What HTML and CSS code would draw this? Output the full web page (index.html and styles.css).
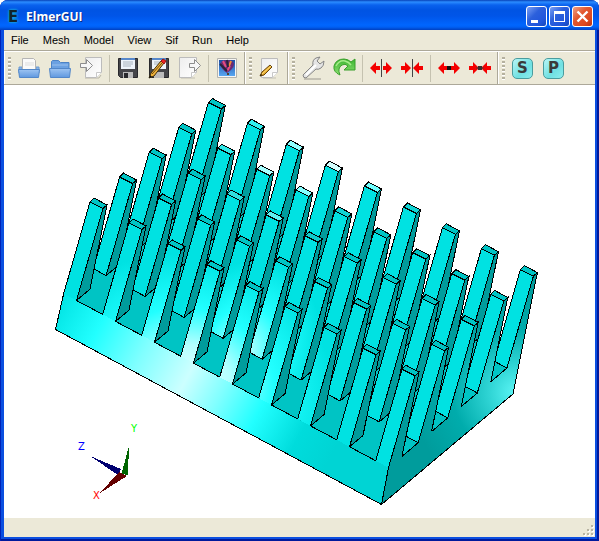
FILE: index.html
```html
<!DOCTYPE html>
<html lang="en">
<head>
<meta charset="utf-8">
<title>ElmerGUI</title>
<link rel="stylesheet" href="styles.css">
</head>
<body>
<div class="window">
  <header class="titlebar">
    <span class="app-icon">E</span>
    <h1 class="title">ElmerGUI</h1>
    <button class="caption" aria-label="Minimize"><svg viewBox="0 0 21 21"><path d="M5 14h7v3h-7z" fill="#fff"/></svg></button>
    <button class="caption" aria-label="Maximize"><svg viewBox="0 0 21 21"><path d="M5 5h11v11H5zM6 8v7h9V8z" fill="#fff" fill-rule="evenodd"/></svg></button>
    <button class="caption close" aria-label="Close"><svg viewBox="0 0 21 21"><path d="M5.500 5.500l10 10M15.500 5.500l-10 10" stroke="#fff" stroke-width="2.400"/></svg></button>
  </header>
  <nav class="menubar">
    <button>File</button><button>Mesh</button><button>Model</button><button>View</button><button>Sif</button><button>Run</button><button>Help</button>
  </nav>
  <div class="toolbars">
    <div class="toolbar">
      <span class="grip"></span>
      <button class="tool" aria-label="Open"><svg viewBox="0 0 24 24"><path d="M2 11h3v6H2zM19 11h3v6h-3z" fill="#86b3ea" stroke="#6d9bd2"/><path d="M5.500 2.500h11l2 2v11h-13z" fill="#fafafa" stroke="#b5b5b5"/><path d="M8 7h9M8 9h9" stroke="#ddd"/><path d="M1.500 13.500h21l-1 8h-19z" fill="url(#tray)" stroke="#5287c9"/></svg></button>
      <button class="tool" aria-label="Open folder"><svg viewBox="0 0 24 24"><path d="M3.500 14V5.500l1-1h6l2 2h8.500V14z" fill="#6ba1e2" stroke="#4d83c5"/><path d="M4 9h16" stroke="#9bc1ee"/><path d="M1.500 12.500h21l-1 9h-19z" fill="url(#tray)" stroke="#5287c9"/></svg></button>
      <button class="tool" aria-label="Import"><svg viewBox="0 0 24 24"><path d="M6 22h14l2-3" stroke="#b9b6a8" fill="none"/><path d="M6.500 1.500h16v15l-5 5h-11z" fill="url(#paper)" stroke="#bcbcbc"/><path d="M17.500 21.500v-5h5" fill="#fff" stroke="#c8c8c8"/><path d="M1.500 7.500h6v-4l6 6-6 6v-4h-6z" fill="#f7f7f7" stroke="#8d8d8d"/></svg></button>
      <span class="sep"></span>
      <button class="tool" aria-label="Save"><svg viewBox="0 0 24 24"><path d="M2.500 2.500h19v19h-17l-2-2z" fill="#454549" stroke="#29292c"/><path d="M5 2h14v11H5z" fill="#edf3fa"/><path d="M5 2h14v2H5z" fill="#5888cb"/><path d="M7 6h10M7 8h10M7 10h8" stroke="#a9b3bd"/><path d="M7 16h10v6H7z" fill="#bbb"/><path d="M8 17h4v5H8z" fill="#29292c"/></svg></button>
      <button class="tool" aria-label="Save as"><svg viewBox="0 0 24 24"><path d="M2.500 2.500h19v19h-17l-2-2z" fill="#454549" stroke="#29292c"/><path d="M5 2h14v11H5z" fill="#edf3fa"/><path d="M5 2h14v2H5z" fill="#5888cb"/><path d="M7 6h10M7 8h8" stroke="#a9b3bd"/><path d="M7 16h10v6H7z" fill="#bbb"/><path d="M2 22l2-5L14 5l3 2L7 20z" fill="#eeb13a" stroke="#40300e"/><path d="M5 18L15 7" stroke="#704c12"/><path d="M14 5l2-2 3 2-2 3z" fill="#e22" stroke="#911"/><path d="M2 22l1-3 2 2z" fill="#111"/></svg></button>
      <button class="tool" aria-label="Export"><svg viewBox="0 0 24 24"><path d="M3 22h14" stroke="#c2bfb2"/><path d="M1.500 1.500h17v15l-5 5h-12z" fill="url(#paper)" stroke="#bcbcbc"/><path d="M13.500 21.500v-5h5" fill="#fff" stroke="#c8c8c8"/><path d="M11.500 7.500h5v-4l6 6-6 6v-4h-5z" fill="#f7f7f7" stroke="#8d8d8d"/></svg></button>
      <span class="sep"></span>
      <button class="tool" aria-label="Save picture"><svg viewBox="0 0 24 24"><path d="M2.500 2.500h19v19h-19z" fill="#f6f6f4" stroke="#b3b3ae"/><path d="M4 4h16v16H4z" fill="url(#sky)"/><path d="M5 8q2-4 7-4 6 0 7 4 0 3-3 6l-4 3q-5-3-7-9" fill="#6b2a74"/><path d="M8 5l3 6M15 10l-3 5" stroke="#e44c80" stroke-width="2"/><path d="M16 5l-2 5" stroke="#f18a38" stroke-width="2"/><path d="M5 8l7 7M12 4l1 7" stroke="#28253a" stroke-width="2"/><path d="M12 17h2v2h-2z" fill="#543"/></svg></button>
    </div>
    <div class="toolbar">
      <span class="grip"></span>
      <button class="tool" aria-label="Edit"><svg viewBox="0 0 24 24"><path d="M5 22h13" stroke="#c2bfb2"/><path d="M3.500 2.500h16v14l-5 5h-11z" fill="url(#paper)" stroke="#bcbcbc"/><path d="M14.500 21.500v-5h5" fill="#fff" stroke="#c8c8c8"/><path d="M2 20l2-4 8-7 2 2-8 8z" fill="#e7a92c" stroke="#65420b"/><path d="M4 18l9-8" stroke="#ffe07a"/><path d="M2 20l1-2 1 1z" fill="#111"/></svg></button>
    </div>
    <div class="toolbar">
      <span class="grip"></span>
      <button class="tool" aria-label="Configure"><svg viewBox="0 0 24 24"><path d="M3 23h17" stroke="#c4c1b4" stroke-width="2"/><path d="M2 19L12 9q-1-5 3-7l4-1-3 4 3 3 4-3q0 5-3 7-3 2-5 1L5 22q-3 0-3-3z" fill="#e5e5e5" stroke="#858585"/><path d="M5 19L15 9" stroke="#fff" stroke-width="2"/></svg></button>
      <button class="tool" aria-label="Remesh"><svg viewBox="0 0 24 24"><path d="M8 19q-7-3-6-9 2-7 10-7 4 0 7 3l4-3v11H12l4-4q-3-3-6-1-5 3-2 10z" fill="url(#leaf)" stroke="#39a02a"/><path d="M4 10q3-6 9-5 4 1 6 4" stroke="#a6ec89" stroke-width="1.500" fill="none"/></svg></button>
      <span class="sep"></span>
      <button class="tool" aria-label="Divide surface"><svg viewBox="0 0 24 24"><path d="M12.500 3v18" stroke="#444"/><path d="M1 12l6-6v4h4v4H7v4zM23 12l-6-6v4h-3v4h3v4z" fill="#f40000"/></svg></button>
      <button class="tool" aria-label="Unify surface"><svg viewBox="0 0 24 24"><path d="M12.500 3v18" stroke="#444"/><path d="M11 12L5 6v4H1v4h4v4zM13 12l6-6v4h4v4h-4v4z" fill="#f40000"/></svg></button>
      <span class="sep"></span>
      <button class="tool" aria-label="Divide edge"><svg viewBox="0 0 24 24"><path d="M1 12l6-6v4h10V6l6 6-6 6v-4H7v4z" fill="#f40000"/><path d="M10 10h4v4h-4z" fill="#111"/></svg></button>
      <button class="tool" aria-label="Unify edge"><svg viewBox="0 0 24 24"><path d="M11 12L5 6v4H1v4h4v4zM13 12l6-6v4h4v4h-4v4z" fill="#f40000"/><path d="M8 12h8" stroke="#444"/><path d="M10 10h4v4h-4z" fill="#333"/></svg></button>
    </div>
    <div class="toolbar last">
      <span class="grip"></span>
      <button class="tool letter"><span>S</span></button>
      <button class="tool letter"><span>P</span></button>
    </div>
  </div>
  <main class="view">
    <svg id="scene" viewBox="4 85 591 433" role="img" aria-label="Heat sink model">
      <defs>
        <linearGradient id="tray" x2="0" y2="1"><stop stop-color="#9dc4f2"/><stop offset="1" stop-color="#5f98df"/></linearGradient>
        <linearGradient id="paper" x2="1" y2="1"><stop stop-color="#eee"/><stop offset="1" stop-color="#fff"/></linearGradient>
        <linearGradient id="sky" x2="0" y2="1"><stop stop-color="#1d4fa4"/><stop offset="1" stop-color="#58a7f2"/></linearGradient>
        <linearGradient id="leaf" x2="0" y2="1"><stop stop-color="#3cb531"/><stop offset="1" stop-color="#8ddf72"/></linearGradient>
        <linearGradient id="slab" gradientUnits="userSpaceOnUse" x1="62" y1="290" x2="340" y2="440">
          <stop stop-color="#00e2e2"/><stop offset=".16" stop-color="#2ff"/><stop offset=".32" stop-color="#80ffff"/><stop offset=".48" stop-color="#ccffff"/><stop offset=".6" stop-color="#80ffff"/><stop offset=".73" stop-color="#2ff"/><stop offset=".88" stop-color="#00dcdc"/><stop offset="1" stop-color="#00d4d4"/>
        </linearGradient>
        <radialGradient id="front" gradientUnits="userSpaceOnUse" cx="0" cy="0" r="1" gradientTransform="translate(195 375) rotate(24) scale(145 115)">
          <stop stop-color="#dff"/><stop offset=".25" stop-color="#b4ffff"/><stop offset=".56" stop-color="#2ff"/><stop offset="1" stop-color="#00e2e2"/>
        </radialGradient>
        <radialGradient id="second" gradientUnits="userSpaceOnUse" cx="0" cy="0" r="1" gradientTransform="translate(240 352) rotate(28) scale(75 95)">
          <stop stop-color="#d4ffff"/><stop offset=".5" stop-color="#2ff"/><stop offset="1" stop-color="#00e2e2"/>
        </radialGradient>
        <radialGradient id="side" gradientUnits="userSpaceOnUse" cx="516" cy="392" r="105">
          <stop stop-color="#5cf5f5"/><stop offset=".25" stop-color="#30d5d5"/><stop offset=".6" stop-color="#00acac"/><stop offset="1" stop-color="#009c9c"/>
        </radialGradient>
      </defs>
      <g id="model"></g>
      <g class="axes">
        <path d="M90 456l31 13-3 6z" fill="#000070"/>
        <path d="M129.500 444l-8 30 6 1z" fill="#006400"/>
        <path d="M100 493l19-21 8 4z" fill="#640000"/>
        <text x="78" y="450" fill="#00f">Z</text>
        <text x="131" y="432" fill="#0f0">Y</text>
        <text x="93" y="499" fill="#f00">X</text>
      </g>
    </svg>
  </main>
  <footer class="status"><svg viewBox="0 0 12 12"><path d="M9 1h2v2H9zM5 5h2v2H5zM9 5h2v2H9zM1 9h2v2H1zM5 9h2v2H5zM9 9h2v2H9z" fill="#fff"/><path d="M8 0h2v2H8zM4 4h2v2H4zM8 4h2v2H8zM0 8h2v2H0zM4 8h2v2H4zM8 8h2v2H8z" fill="#b8b4a2"/></svg></footer>
</div>
<script src="model.js"></script>
</body>
</html>
```
FILE: model.js
```js
// Heat sink: a slab carrying 5 rows of 9 tapered pins, drawn back to front.
const COLS = 9, ROWS = 5;
const model = document.getElementById('model');
const colStep = [39, 20.9], rowStep = [29.6, -24.9];
const TOP = '#00c4c4', FACE = '#00e2e2', SIDE = '#009c9c';
const topColors = {
  '4,1': '#30f0f0', '4,2': '#90ffff', '4,3': '#d4ffff', '4,4': '#70ffff', '4,5': '#10d4d4',
  '3,1': '#30e8e8', '3,2': '#a8ffff', '3,3': '#84ffff', '3,4': '#10d4d4',
  '2,2': '#30dede', '2,3': '#60f0f0', '2,4': '#10cccc'
};

function at(p, r, c) {
  return [p[0] + r * rowStep[0] + c * colStep[0], p[1] + r * rowStep[1] + c * colStep[1]];
}
function draw(points, fill, close) {
  const el = document.createElementNS('http://www.w3.org/2000/svg', 'path');
  el.setAttribute('d', 'M' + points.map(p => p.join(' ')).join('L') + (close ? 'Z' : ''));
  el.setAttribute('fill', fill);
  model.appendChild(el);
  return el;
}
function area(points, fill) { draw(points, fill, true).setAttribute('class', 'area'); }
function line(points) { draw(points, 'none', false); }

const fl = [63.7, 293.5], fr = [76.5, 300.5], br = [90, 289.2];
const tfl = [90, 202], tfr = [103, 208.5], tbr = [107, 205], tbl = [94, 198];
const cornerL = fl, cornerR = at(fr, 0, 8), cornerB = at(br, 4, 8);

area([cornerL, cornerR, cornerB, [196, 181.7]], TOP);
area([cornerL, cornerR, [381.5, 504.5], [55.5, 329.5]], 'url(#slab)');
area([cornerR, cornerB, [513, 394], [381.5, 504.5]], 'url(#side)');
line([cornerL, [55.5, 329.5], [381.5, 504.5], [513, 394], cornerB]);
line([cornerR, [381.5, 504.5]]);

for (let r = ROWS - 1; r >= 0; r--) {
  if (r < ROWS - 1) line([at(br, r, 8), at(fr, r + 1, 8)]);
  for (let c = 0; c < COLS; c++) {
    const q = p => at(p, r, c);
    const sideFace = [q(fr), q(tfr), q(tbr), q(br)];
    const frontFace = [q(fl), q(tfl), q(tfr), q(fr)];
    area(sideFace, c === COLS - 1 ? 'url(#side)' : SIDE);
    line(c === COLS - 1 ? sideFace : sideFace.concat([q(fr)]));
    area(frontFace, r === 0 ? 'url(#front)' : r === 1 ? 'url(#second)' : FACE);
    line(r === 0 ? frontFace : frontFace.concat([q(fl)]));
    draw([q(tfl), q(tfr), q(tbr), q(tbl)], topColors[r + ',' + c] || TOP, true);
    if (r === 0 && c < COLS - 1) line([q(fr), at(fl, 0, c + 1)]);
  }
}
```
FILE: styles.css
```css
* { box-sizing: border-box; }
body {
  margin: 0;
  background: #fff;
  font-family: "Liberation Sans", Arial, sans-serif;
  font-size: 11px;
  color: #000;
}
button { margin: 0; padding: 0; border: 0; background: none; font: inherit; color: inherit; }
svg { display: block; }

.window {
  display: flex;
  flex-direction: column;
  height: 100vh;
  padding: 0 4px 4px;
  border-radius: 8px 8px 0 0;
  background: #0b4fe0;
  box-shadow: inset 1px 0 #0022b8, inset -2px -2px #001a9c;
}
.titlebar {
  flex: none;
  display: flex;
  align-items: center;
  gap: 2px;
  height: 30px;
  margin: 0 -4px;
  padding: 3px 6px 0 8px;
  border-radius: 8px 8px 0 0;
  background: linear-gradient(#0842b8 0, #2b8cff 2px, #0a62ee 5px, #0054e3 10px, #0055e8 16px, #0066ff 25px, #0060f5 27px, #0040c0 30px);
}
.app-icon {
  width: 16px;
  font: bold 15px/16px "DejaVu Sans", sans-serif;
  color: #10242c;
  text-shadow: 0 0 2px #18b8e0, 0 0 3px #18b8e0;
}
.title {
  flex: 1;
  margin: 0;
  font: bold 12px/16px "Open Sans", sans-serif;
  color: #fff;
  text-shadow: 1px 1px #0a2a85;
}
.caption {
  width: 21px;
  height: 21px;
  border: 1px solid #fff;
  border-radius: 3px;
  background: linear-gradient(135deg, #7ba0f4, #2c60dc 40%, #2156dc 75%, #1748b8);
}
.caption svg { width: 21px; height: 21px; margin: -1px; }
.caption.close { background: linear-gradient(135deg, #f0a085, #e2572f 40%, #dc4820 75%, #b83210); }

.menubar {
  flex: none;
  display: flex;
  align-items: center;
  gap: 14px;
  height: 21px;
  padding: 0 7px;
  background: #ece9d8;
  border-bottom: 1px solid #aca899;
}
.toolbars {
  flex: none;
  display: flex;
  height: 34px;
  background: #ece9d8;
  border-top: 1px solid #fff;
  border-bottom: 1px solid #aca899;
}
.toolbar {
  display: flex;
  align-items: center;
  padding: 0 2px 0 3px;
  border-left: 1px solid #fff;
  border-right: 1px solid #aca899;
}
.toolbar.last { flex: 1; border-right: 0; }
.grip {
  width: 3px;
  height: 23px;
  margin-right: 2px;
  background: repeating-linear-gradient(#b5b19f 0 2px, #fff 2px 3px, transparent 3px 4px);
}
.tool { display: grid; place-items: center; width: 31px; height: 30px; }
.tool svg { width: 24px; height: 24px; }
.sep { width: 6px; height: 27px; background: linear-gradient(#c5c2b0, #c5c2b0) 3px 0 / 1px 100% no-repeat; }
.letter span {
  width: 21px;
  height: 21px;
  border: 1px solid #4a9c9e;
  border-radius: 5px;
  background: linear-gradient(135deg, #b8f6f6, #70e0e2 60%, #8eeeee);
  font: bold 15px/19px "DejaVu Sans", sans-serif;
  color: #3a3a3a;
}

.view { flex: 1; min-height: 0; background: #fff; }
.view > svg { width: 100%; height: 100%; }
#model path { stroke: #000; stroke-width: 1; shape-rendering: crispEdges; }
#model .area { stroke: none; }
.axes path { shape-rendering: crispEdges; }
.axes text { font: 10px "DejaVu Sans", sans-serif; }

.status {
  flex: none;
  display: flex;
  justify-content: flex-end;
  align-items: flex-end;
  height: 19px;
  background: #ece9d8;
}
.status svg { width: 12px; height: 12px; }
```
